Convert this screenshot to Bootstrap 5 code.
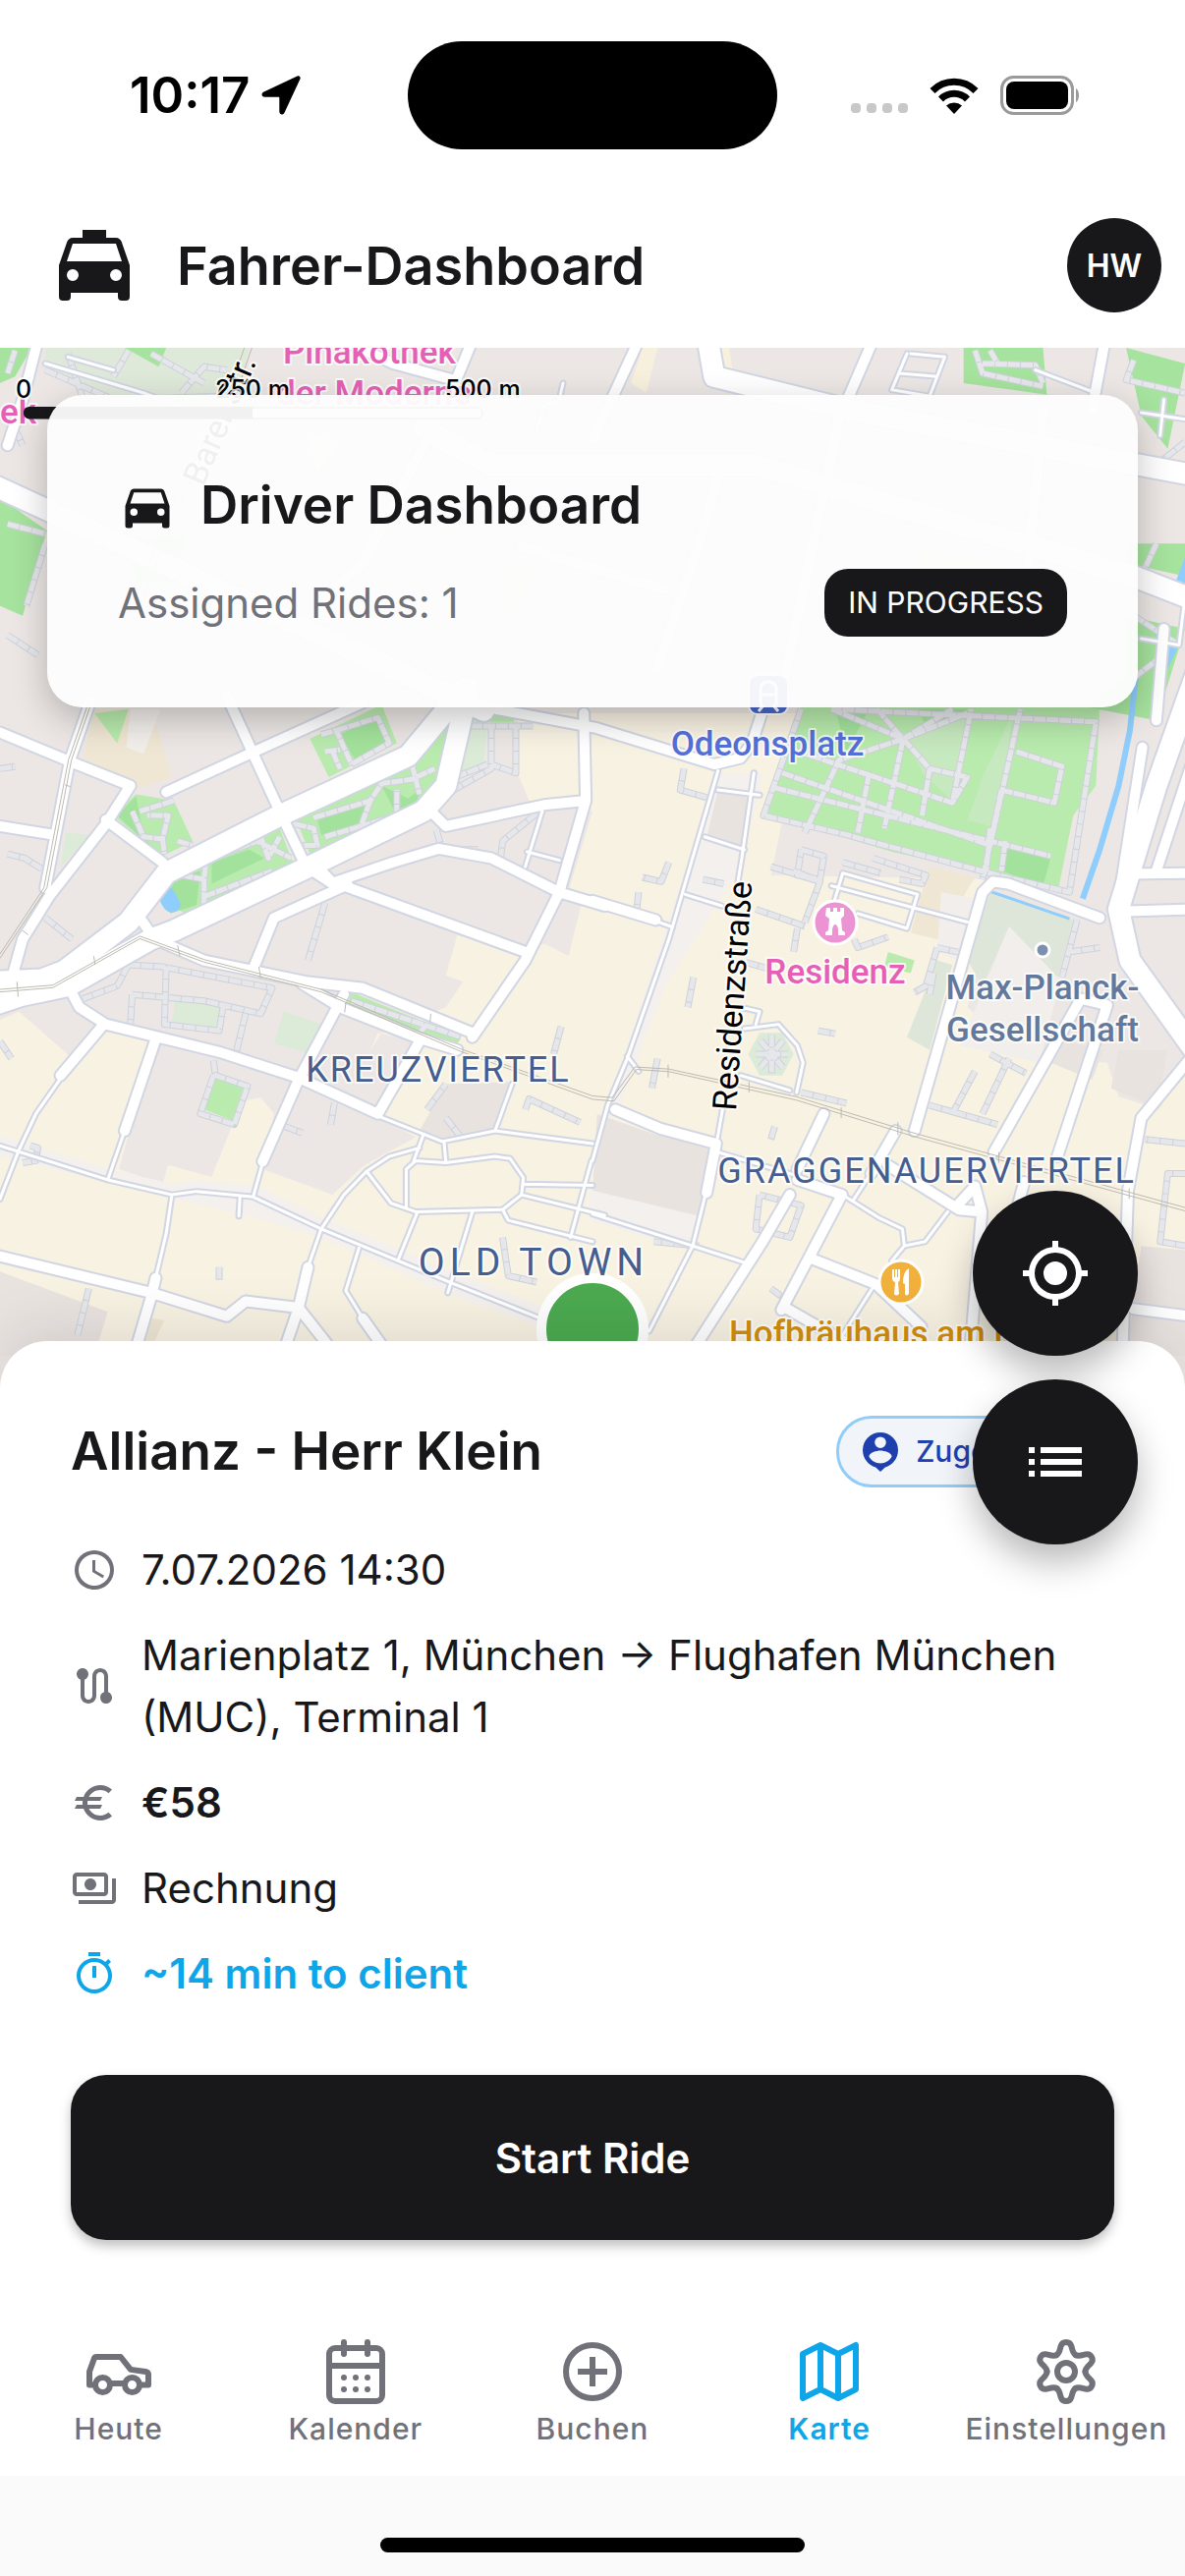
<!DOCTYPE html>
<html lang="de">
<head>
<meta charset="utf-8">
<meta name="viewport" content="width=device-width, initial-scale=1">
<title>Fahrer-Dashboard</title>
<link href="https://cdn.jsdelivr.net/npm/bootstrap@5.3.0/dist/css/bootstrap.min.css" rel="stylesheet">
<style>
:root{--ink:#18181b;--mute:#71717a;--sky:#0ea5e9}
body{font-family:Inter,"Noto Sans",sans-serif;color:var(--ink);background:#fff;font-size:42px;line-height:63px}
.screen{min-height:100vh}
svg{display:block;flex:none}
.status{height:194px;color:#000;padding:0 108px}
.clock{font-size:51px;font-weight:600;line-height:60px}
.island{width:376px;height:110px;border-radius:55px;background:#000}
.side{flex:1 1 0;gap:12px}
.signals{gap:22px}
.topbar{height:160px;padding:0 24px 8px 48px;gap:36px}
.heading{font-size:53px;line-height:81px;font-weight:600;margin:0}
.topbar .heading{font-size:54px}
.avatar{width:96px;height:96px;border-radius:50%;background:var(--ink);color:#fff;font-size:32px;font-weight:600;border:0;padding:0}
.mapwrap{flex:1 0 auto;background:#ece7e4;isolation:isolate}
.mapart{position:absolute;inset:0;width:100%;height:100%;z-index:-1}
.mapart path{vector-effect:non-scaling-stroke}
.mapart text{font-family:Roboto,"Noto Sans",sans-serif;font-size:35px;font-weight:500;paint-order:stroke;stroke:#fffc;stroke-width:4px;stroke-linejoin:round}
.mapart .street{font-weight:400;font-size:34px}
.mapart .district{font-size:36px;font-weight:400;letter-spacing:2px;fill:#465d8f}
.mapart .town{font-size:39px;letter-spacing:5px}
.mapart .ruler{font-family:Inter,sans-serif;font-size:25px;fill:#000}
.summary{margin:48px 48px 0;padding:72px;border:0;border-radius:36px;background:rgba(253,253,253,.95);box-shadow:0 12px 36px rgba(0,0,0,.24);color:var(--ink)}
.state{background:var(--ink);border-radius:24px;padding:0 24px;font-size:30px;line-height:69px;font-weight:400;color:#fff}
.sheet{background:#fff;border-radius:48px 48px 0 0;padding:72px;box-shadow:0 -12px 60px rgba(0,0,0,.1)}
.fabs{position:absolute;right:48px;top:-153px;gap:24px}
.fab{width:168px;height:168px;border-radius:50%;border:0;padding:48px;background:var(--ink);color:#fff;box-shadow:0 18px 36px rgba(0,0,0,.28)}
.chip{border:3px solid #90cdf9;border-radius:36px;background:#f1f4f9;color:#1e40af;font-size:30px;font-weight:500;line-height:67px;padding:0 24px 0 18px;gap:12px}
.facts{gap:24px;margin-top:48px}
.fact{gap:24px}
.gray{color:var(--mute)}
.sky{color:var(--sky)}
.start{margin-top:72px;height:168px;border:0;border-radius:36px;background:var(--ink);color:#fff;font-size:42px;font-weight:600;box-shadow:0 6px 12px rgba(0,0,0,.25)}
.tabs{height:168px;background:#fff;z-index:1}
.tab{flex:1 1 0;min-width:0;padding-top:26px;color:var(--mute);text-decoration:none;font-size:30px;line-height:36px;font-weight:500;letter-spacing:1px;gap:4px}
.tab.active{color:var(--sky);font-weight:600}
.tab svg{fill:none;stroke:currentColor;stroke-width:2;stroke-linecap:round;stroke-linejoin:round}
.homebar{height:102px;background:#fafafa;padding-bottom:24px}
.homebar span{width:432px;height:15px;border-radius:8px;background:#000}
</style>
</head>
<body>
<div class="screen d-flex flex-column">
  <div class="status d-flex align-items-center">
    <div class="side d-flex align-items-center">
      <span class="clock ms-4">10:17</span>
      <svg width="40" height="40" viewBox="0 0 40 40" fill="currentColor"><path d="M36.500.6 2.500 16.400C-.6 17.900.1 21.700 3.400 21.700H17.300C18 21.700 18.300 22 18.300 22.700V36.600C18.300 39.900 22.200 40.700 23.600 37.500L39.400 3.500C40.300 1.500 38.500-.3 36.500.6Z"/></svg>
    </div>
    <div class="island"></div>
    <div class="side signals d-flex align-items-center justify-content-end">
      <svg width="58" height="38" viewBox="0 0 58 38" fill="#c8c8ca"><rect y="27" width="10" height="10" rx="4"/><rect x="16" y="27" width="10" height="10" rx="4"/><rect x="32" y="27" width="10" height="10" rx="4"/><rect x="48" y="27" width="10" height="10" rx="4"/></svg>
      <svg width="50" height="38" viewBox="0 0 50 38"><g fill="none" stroke="#000" stroke-width="7"><path d="M3 14.500a31 31 0 0 1 44 0"/><path d="M11.500 23a19 19 0 0 1 27 0"/></g><path d="M25 38 17 29.500a12 12 0 0 1 16 0Z"/></svg>
      <svg width="80" height="40" viewBox="0 0 80 40"><rect x="1.500" y="1.500" width="72" height="37" rx="12" fill="none" stroke="#9a9a9c" stroke-width="3"/><rect x="6" y="6" width="63" height="28" rx="8"/><path d="M77 13c4 2 4 12 0 14Z" fill="#9a9a9c"/></svg>
    </div>
  </div>

  <header class="topbar d-flex align-items-center">
    <svg width="96" height="96" viewBox="0 0 24 24" fill="currentColor"><path d="M5,11L6.5,6.5H17.5L19,11M17.5,16A1.5,1.5 0 0,1 16,14.500A1.5,1.5 0 0,1 17.5,13A1.5,1.5 0 0,1 19,14.500A1.5,1.5 0 0,1 17.5,16M6.5,16A1.5,1.5 0 0,1 5,14.500A1.5,1.5 0 0,1 6.5,13A1.5,1.5 0 0,1 8,14.500A1.5,1.5 0 0,1 6.5,16M18.920,6C18.720,5.420 18.160,5 17.5,5H15V3H9V5H6.5C5.840,5 5.280,5.420 5.080,6L3,12V20A1,1 0 0,0 4,21H5A1,1 0 0,0 6,20V19H18V20A1,1 0 0,0 19,21H20A1,1 0 0,0 21,20V12L18.920,6Z"/></svg>
    <h1 class="heading flex-grow-1">Fahrer-Dashboard</h1>
    <button class="avatar" type="button" aria-label="Profil">HW</button>
  </header>

  <main class="mapwrap position-relative d-flex flex-column">
    <svg class="mapart" viewBox="0 354 1206 1998" preserveAspectRatio="xMidYMin slice" role="img" aria-label="Karte">
      <defs>
        <g id="wide">
          <g transform="translate(0 700) scale(.3846 .4337)">
            <path d="M-20 690 110 685 170 665 340 550 440 435 740 300 1080 160 1230 0"/>
            <path d="M-20 745 60 722 180 700 400 590 460 570 830 415 1120 290 1180 230 1240 0"/>
            <path d="M3180-70 3060 230 2960 520 2990 640 3160 850"/>
          </g>
          <g transform="translate(0 340) scale(.7692 .3333)">
            <path d="M-20 450 640 1150"/><path d="M560 290 650 400 1000 400 1500 740 1600 830"/><path d="M935 0 945 130 1120 230 1600 440"/>
          </g>
        </g>
        <g id="mid">
          <g transform="translate(0 700) scale(.3846 .4337)">
            <path d="M0 105 190 175 345 230 280 320 130 490 60 590 35 670M240 30 185 170 120 470M0 325 140 345M280 310 430 410M600 20 740 290 810 420 880 460M440 245 660 155 960 35"/>
            <path d="M840 420 880 458 1040 410 1160 378 1300 400 1480 480 1600 512M910 465 1390 620M920 462 725 540 670 660M370 540 410 590 540 640 810 690 960 705 1250 810M800 695 900 750 1100 820 1210 850"/>
            <path d="M1545 60 1550 265 1480 480 1390 640 1250 820M1550 265 1440 275 1180 325 1140 290M180 700 210 750 280 790 580 855 790 915 1000 1000 1110 830M270 795 160 910M410 830 330 1040M910 720 790 920 695 1112"/>
            <path d="M-20 1330 400 1420 600 1475 650 1440 790 1455 870 1545M412 1385 400 1430 350 1580M815 1360 790 1455 750 1560M960 1480 1040 1580M1250 40 1580 95 1890 180 1960 165 1990 130 2030 20"/>
            <path d="M1568 500 1735 545M2420 1040 2600 480 2628 455 2668 460 2910 540M2980 437 3160 435M2960 525 3160 520M3060 430 3160 160M3023 140 2960 500M2630 1090 2860 730 2930 745 2798 1100M2370 1040 2305 1140M2180 1000 2110 1130"/>
            <path d="M3150 870 3020 1010 2985 1180 2970 1568M1628 990 1748 1035 1895 1070 1870 1185M2090 1190 2018 1300 1830 1560M2110 1155 2228 1190 2068 1460M2148 1340 2318 1400 2438 1500M2078 1455 2300 1568M2348 1120 2538 1225 2598 1230 2580 1170 2528 1220M2598 1230 2568 1550M3000 1458 3150 1475M2710 1160 2680 1260"/>
          </g>
          <g transform="translate(0 340) scale(.7692 .3333)">
            <path d="M50 20 30 200 10 340M455 20 520 90 600 140M625 20 600 160 480 700 430 800M845 20 785 320M1155 20 1110 260 1030 1140M1462 20 1445 230M1380 240 1360 700M1540 900 1530 1180"/>
            <path d="M950 440 930 600 870 1020M690 650 880 780"/>
          </g>
        </g>
        <g id="lane">
          <g transform="translate(0 700) scale(.3846 .4337)">
            <path d="M0 1075 285 1155 455 1190 520 1182 670 1195 850 1270 1190 1395 1430 1480M455 1190 440 1280 412 1385M328 1045 285 1155M695 1115 670 1195M162 915 95 1000 50 1085 0 1200M815 1360 850 1270 910 1190 970 1135 1030 1100 1110 1080"/>
            <path d="M970 1135 1035 1210 1100 1230 1330 1225 1380 1190 1385 1150 1350 1105 1310 1100 1180 1115 1100 1110 1075 1130 1075 1220M1000 1005 1170 1065 1310 1040 1568 1070M1310 1040 1355 930M1095 1110 1120 1050M1175 1065 1180 1115M1385 1165 1568 1168M1380 1190 1600 1238M1330 1225 1345 1250 1568 1300"/>
            <path d="M1105 1230 1055 1340M1250 1230 1185 1420M950 1315 915 1415 960 1480M1565 1110 1510 1290M635 1195 632 1240M1395 385 1480 405M1435 290 1390 420"/>
            <path d="M1900 195 1770 590 1660 870 1608 980 1568 1110M1995 200 1963 400 1950 470M1900 240 2010 252M1865 350 1970 380M1813 485 1910 512M1728 545 1780 562M1568 1235 1833 1310 1973 1350M1868 1185 1833 1310 1718 1510M1912 990 1898 1060M1660 865 1690 900"/>
            <path d="M2238 1195 2328 1245 2388 1270 2393 1310 2360 1345M2393 1310 2448 1300 2508 1230M2308 1410 2208 1550M1900 1090 2108 1145M2308 1135 2260 1200"/>
            <path d="M2208 500 2230 435 2428 485 2400 565 2270 530M2200 465 2560 550M1970 800 2060 790 2110 840 2125 880 2108 950M1960 910 2090 945M1960 750 2010 760 2000 790"/>
          </g>
          <g transform="translate(0 340) scale(.7692 .3333)">
            <path d="M60 90 190 180 260 240M90 70 150 110M745 150 740 200 720 220 710 300M1205 60 1250 70 1230 190 1180 170 1200 60M1190 120 1240 130M1540 200 1535 310M1510 240 1568 260M1370 110 1450 180M1510 760 1568 800 1560 950 1510 930"/>
          </g>
        </g>
        <g id="walk">
          <g transform="translate(0 700) scale(.3846 .4337)">
            <path d="M340 650 430 655 720 705 690 765 540 735 350 720M440 655 435 790 580 805 590 750M350 720 345 790M340 650 310 700 220 730M650 765 625 855M565 910 530 1000 620 1025 655 935 570 910M565 875 570 910M20 390 65 400 110 425M0 190 40 185M120 540 190 590M0 830 30 870M860 505 815 640M930 735 1220 820M1130 790 1110 810M1130 990 1180 930M1390 990 1400 965 1535 1020M1180 1010 1220 1055M1485 795 1465 860M885 975 875 1025M755 1030 800 1045M80 1075 100 1080 95 1110 60 1115M580 1360 580 1390M235 1410 205 1520"/>
            <path d="M350 290 380 350 430 355 445 300 390 300M430 355 435 390M460 265 370 290M470 360 510 370M480 440 540 450 545 405 680 360 770 400M540 450 540 510M690 350 710 400 740 350M540 490 720 430M780 320 830 330 840 370 800 370M830 305 980 265 1010 225 1090 215 1150 190M980 265 955 325 1050 300 1050 240M955 325 860 350M1090 180 1110 250"/>
            <path d="M850 110 890 100 930 180M860 150 900 145M890 100 1000 70 1030 130 930 180M880 150 900 190M1245 90 1410 90M1300 90 1300 190 1200 240M1365 90 1365 200 1300 180M1205 210 1290 180M1420 295 1330 360 1325 400M1155 335 1165 365M1200 380 1265 380M1330 1290 1345 1380 1420 1395"/>
            <path d="M2120 50 2020 300 2240 345 2300 360 2640 440 2830 480 2900 80 2200 50M2080 140 2520 270 2570 50M2070 200 2620 370 2700 50M2050 235 2780 395M2200 50 2390 120 2560 60M2390 120 2340 330M2390 120 2220 170 2130 340M2390 120 2460 190 2440 300M2460 190 2560 210 2520 270M2320 50 2390 120 2520 50M2690 150 2810 185 2790 270 2650 240M2300 200 2270 340M2650 240 2600 450M2620 330 2610 430M2660 360 2650 430"/>
            <path d="M2040 420 2170 455 2130 550M2170 455 2100 430M2120 380 2180 395 2170 450 2110 440 2120 380M2000 520 2130 560M2310 400 2450 440 2440 460 2380 450M2230 410 2330 435M1810 190 1800 240 1880 260M1770 410 1750 455 1700 445M1690 480 1685 520M1835 680 1820 750M1975 645 2035 660M2110 565 2100 620M2260 590 2270 610 2350 585M2165 805 2210 812M1860 450 1915 460M2470 670 2460 720M2480 610 2450 700 2420 715M2480 610 2560 625"/>
            <path d="M2000 860 2085 860M2042 815 2042 905M2012 828 2072 892M2072 828 2012 892M2460 980 2640 1025M2580 900 2520 1000M2670 870 2600 1000M2620 860 2715 905M2850 545 2810 680M2830 620 2910 610M2120 950 2240 975M1740 870 1725 940M2050 1030 2040 1060M2010 1190 2000 1270 2090 1290 2120 1215 2010 1190M1850 1310 1730 1300M2040 1410 2070 1430M3136 1070 3030 1060M3136 1140 3090 1140 3070 1300 3136 1310"/>
          </g>
          <g transform="translate(0 340) scale(.7692 .3333)">
            <path d="M20 50 10 120M60 110 150 200 300 190M170 50 150 130M200 60 270 150M240 180 270 100 300 110M90 60 110 200M20 290 30 340M1290 50 1300 120 1380 160M1300 90 1370 95 1380 150M1310 50 1320 90M1568 330 1530 400M10 580 60 610M60 640 35 830M10 920 50 980M1500 80 1490 140 1568 180M1530 640 1510 740M1500 860 1560 950M1500 1050 1540 980"/>
          </g>
        </g>
        <g id="rail">
          <g transform="translate(0 700) scale(.3846 .4337)">
            <path d="M236 30 181 170 116 470 0 625M244 30 189 170 124 470 0 635M0 708 140 698 370 583 540 638 850 708 1220 848 1568 958 1620 962 1680 890 1770 895 2108 960 2418 1045 3136 1220M0 714 140 704 370 589 540 644 850 714 1220 854 1568 966 1625 970 1684 896 1770 901 2108 968 2418 1053 3136 1228"/>
            <path d="M45 690 48 725M248 630 252 650M470 605 476 630M685 655 690 682M915 740 912 762M1140 765 1138 785M172 228 186 232M60 570 75 580M1768 885 1768 915M1982 925 1982 950M2226 985 2226 1010M2376 1020 2376 1050M2643 1090 2643 1115M2988 1175 2988 1200"/>
          </g>
          <g transform="translate(0 340) scale(.7692 .3333)"><path d="M325 30 300 200 235 480 180 800M335 30 310 200 245 480 190 800"/></g>
        </g>
      </defs>

      <!-- land use -->
      <g transform="translate(0 700) scale(.3846 .4337)">
        <path fill="#f8f2e3" d="M0 780 50 760 185 865 275 800 405 835 315 1130 430 1165 445 1120 560 1148 640 970 690 962 725 1000 695 1130 880 1190 965 1120 1100 1055 1010 1010 1110 830 1000 810 980 850 1010 810 1180 750 1225 690 1180 675 1210 580 1380 630 1440 600 1505 630 1540 500 1500 490 1568 290 1400 265 1370 200 1370 60 2130 60 2040 440 2640 450 2560 750 2700 860 2930 880 2960 960 3068 990 3136 860 3136 1568 0 1568Z"/>
        <path fill="#f3f0ee" d="M0 1050 290 1130 460 1165 520 1155 680 1170 860 1245 1190 1370 1430 1450 1430 1500 1180 1420 850 1290 700 1250 0 1100ZM1560 1170 1870 1230 1830 1320 1560 1250ZM1900 200 2020 200 1960 420 1760 700 1640 980 1568 1110 1600 1000Z"/>
        <path fill="#efe6d3" d="M250 50 400 50 455 210 365 235 220 165ZM2458 420 2580 445 2480 590 2410 575ZM375 1475 435 1485 400 1550 360 1530Z"/>
        <path fill="#e9e3e0" d="M0 1370 285 1465 250 1568 0 1568ZM1580 1000 1740 1050 1890 1080 1850 1240 1568 1180ZM1110 1040 1180 930 1350 925 1300 1040 1170 1060ZM1900 240 1990 260 1960 380 1870 350ZM2820 830 2920 850 2890 920 2780 880ZM3020 1310 3136 1320 3136 1568 2980 1568ZM2960 850 3090 850 3060 985 2940 940Z"/>
        <path fill="#f1eeeb" d="M2490 480 2620 500 2560 650 2480 620ZM2670 560 2830 610 2750 880 2540 840ZM345 50 425 50 380 155 335 140Z"/>
        <path fill="#dee6da" d="M2620 480 2840 545 2800 680 2670 560 2600 700 2560 640ZM2480 640 2520 650 2460 850 2400 820Z"/>
        <path fill="#dcead8" d="M465 725 585 750 575 800 455 785ZM750 760 850 790 825 860 725 835ZM1240 60 1290 90 1280 180 1220 200ZM175 340 240 345 160 420ZM2010 810 2070 810 2100 860 2070 910 2010 910 1980 860Z"/>
        <path fill="#b8ebad" d="M300 300 360 250 460 265 510 360 430 395ZM470 440 740 330 775 410 490 530 430 500ZM780 300 1000 220 1190 80 1150 240 1120 280 820 390ZM820 120 1010 40 1050 130 870 210ZM250 60 340 50 310 130ZM930 715 1220 820 1205 845 920 745ZM560 915 645 935 615 1015 540 990ZM1260 50 1360 50 1360 80 1260 80ZM2120 40 2910 40 2900 230 2840 300 2800 475 2640 440 2360 385 2230 350 2030 295ZM2350 620 2420 640 2410 670 2340 655Z"/>
        <path fill="#a3e29c" d="M310 300 360 255 380 350 420 390ZM440 450 530 430 520 510 450 530ZM560 410 660 380 700 400 560 460ZM840 310 970 270 950 330 850 345ZM1010 230 1080 260 1110 240 1100 280 1050 300ZM900 110 1000 65 1030 125 940 170ZM2650 370 2780 400 2760 465 2650 430ZM2210 50 2300 50 2240 150ZM2430 50 2560 50 2460 110Z"/>
        <path fill="#c7e9bf" d="M2400 120 2560 60 2520 265 2440 200ZM2600 210 2680 60 2640 330 2560 310Z"/>
        <path fill="#8fcdfc" d="M421 490Q430 460 452 468 480 500 478 515 460 535 440 523 424 510 421 490Z"/>
      </g>
      <g transform="translate(0 340) scale(.7692 .3333)">
        <path fill="#dfe9da" d="M60 42 330 42 310 250 200 240 60 110Z"/>
        <path fill="#a6e39e" d="M0 42 42 42 20 130 0 150ZM0 500 62 600 30 860 0 830ZM1275 42 1380 42 1385 185 1275 150ZM1490 42 1568 90 1545 350 1510 250ZM1490 640 1568 640 1568 740 1490 700ZM1490 860 1568 900 1530 1180 1440 1140 1490 1040ZM170 620 245 620 230 760 180 760ZM165 42 220 42 210 100Z"/>
        <path fill="#f7f0dd" d="M850 42 870 42 855 180 835 150ZM935 42 965 42 970 120 945 110ZM410 310 450 330 420 420Z"/>
        <path fill="#ece5d0" d="M1220 660 1320 700 1300 780 1210 720ZM670 700 710 690 680 880 660 850Z"/>
        <path fill="#8fcdfc" d="M1568 680 1555 760 1568 780ZM1525 890 1560 950 1545 1020 1535 960Z"/>
      </g>
      <g fill="none" stroke="#8fcdfc" transform="translate(0 700) scale(.3846 .4337)">
        <path stroke-width="6" d="M3006-30 2990 100 2960 230 2910 380 2865 495"/><path stroke-width="3" d="M2620 478 2830 542"/>
      </g>

      <!-- streets -->
      <g fill="none" stroke-linejoin="round">
        <use href="#walk" stroke="#cfd1da" stroke-width="7"/>
        <use href="#walk" stroke="#e6e7ea" stroke-width="5" stroke-dasharray="12 1"/>
        <g stroke-linecap="round">
          <use href="#lane" stroke="#d1d6e2" stroke-width="7"/>
          <use href="#mid" stroke="#d1d6e2" stroke-width="14"/>
          <use href="#wide" stroke="#d1d6e2" stroke-width="25"/>
          <use href="#lane" stroke="#fff" stroke-width="3"/>
          <use href="#mid" stroke="#fff" stroke-width="10"/>
          <use href="#wide" stroke="#fff" stroke-width="21"/>
        </g>
        <use href="#rail" stroke="#bdbab0" stroke-width="1"/>
      </g>

      <!-- points of interest -->
      <rect x="762" y="687" width="40" height="40" rx="9" fill="#4868cd" stroke="#fff" stroke-width="2"/>
      <path d="M774 718V702q0-8 8-8t8 8v16M774 707h16M772 724l5-6M792 724l-5-6" fill="none" stroke="#fff" stroke-width="3"/>
      <circle cx="850" cy="939" r="22" fill="#ec94d3" stroke="#fff" stroke-width="3"/>
      <path fill="#fff" d="M841 924h4v4h3v-4h4v4h3v-4h4v8l-3 3 1 12 3 2v3h-7v-6q-1-5-3-5t-3 5v6h-7v-3l3-2 1-12-4-3Z"/>
      <circle cx="1061" cy="967" r="7" fill="#7d8fae" stroke="#fff" stroke-width="3"/>
      <circle cx="917" cy="1305" r="22" fill="#f2b13a" stroke="#fff" stroke-width="3"/>
      <path fill="#fff" d="M908 1292h2v8h1v-8h2v8h1v-8h2v9q0 3-2 4l1 12q-3 3-5 0l1-12q-3-1-3-4ZM925 1291v26q-3 3-4 0v-10l-2-1q0-12 6-15Z"/>
      <circle cx="603" cy="1353" r="52" fill="#4caa50" stroke="#fff" stroke-width="10"/>

      <text x="288" y="370" fill="#e560b5">Pinakothek</text>
      <text x="281" y="412" fill="#e560b5">der Moderne</text>
      <text x="0" y="431" fill="#e560b5">ek</text>
      <text class="street" transform="translate(207 496) rotate(-67)">Barer Str.</text>
      <text x="781" y="769" text-anchor="middle" fill="#5470d8">Odeonsplatz</text>
      <text x="850" y="1001" text-anchor="middle" fill="#e560b5">Residenz</text>
      <text x="1061" y="1017" text-anchor="middle" fill="#62789c">Max-Planck-</text>
      <text x="1061" y="1060" text-anchor="middle" fill="#62789c">Gesellschaft</text>
      <text class="street" transform="translate(749 1131) rotate(-86)">Residenzstraße</text>
      <text class="district" x="446" y="1101" text-anchor="middle">KREUZVIERTEL</text>
      <text class="district" x="943" y="1204" text-anchor="middle">GRAGGENAUERVIERTEL</text>
      <text class="district town" x="543" y="1298" text-anchor="middle">OLD TOWN</text>
      <text x="742" y="1369" fill="#d18e0c">Hofbräuhaus am Platzl</text>

      <!-- distance ruler -->
      <rect x="25" y="415" width="466" height="11" rx="5" fill="#fff" stroke="#18181b"/>
      <path fill="#18181b" d="M30 414H257V426H30Q24 426 24 420T30 414Z"/>
      <text class="ruler" x="16" y="405">0</text>
      <text class="ruler" x="219" y="405">250 m</text>
      <text class="ruler" x="453" y="405">500 m</text>
    </svg>

    <section class="card summary">
      <div class="d-flex align-items-center gap-4">
        <svg width="60" height="60" viewBox="0 0 24 24" fill="currentColor"><path d="M5,11L6.5,6.5H17.5L19,11M17.5,16A1.5,1.5 0 0,1 16,14.500A1.5,1.5 0 0,1 17.5,13A1.5,1.5 0 0,1 19,14.500A1.5,1.5 0 0,1 17.5,16M6.5,16A1.5,1.5 0 0,1 5,14.500A1.5,1.5 0 0,1 6.5,13A1.5,1.5 0 0,1 8,14.500A1.5,1.5 0 0,1 6.5,16M18.920,6C18.720,5.420 18.160,5 17.5,5H6.5C5.840,5 5.280,5.420 5.080,6L3,12V20A1,1 0 0,0 4,21H5A1,1 0 0,0 6,20V19H18V20A1,1 0 0,0 19,21H20A1,1 0 0,0 21,20V12L18.920,6Z"/></svg>
        <h2 class="heading">Driver Dashboard</h2>
      </div>
      <div class="d-flex align-items-center justify-content-between mt-4">
        <span class="gray">Assigned Rides: 1</span>
        <span class="state">IN PROGRESS</span>
      </div>
    </section>

    <section class="sheet position-relative mt-auto">
      <div class="d-flex align-items-center justify-content-between">
        <h2 class="heading">Allianz - Herr Klein</h2>
        <span class="chip d-flex align-items-center">
          <svg width="48" height="48" viewBox="0 0 24 24" fill="currentColor" fill-rule="evenodd"><path d="M12 2a9 9 0 0 0-9 9c0 4.200 2.800 7.700 6.600 8.700L12 22l2.400-2.300C18.200 18.700 21 15.200 21 11a9 9 0 0 0-9-9ZM12 4.200a2.900 2.900 0 1 1 0 5.800 2.900 2.900 0 0 1 0-5.800ZM12 17.800c-2.600 0-4.800-1.500-5.800-3.500.1-2 3.900-3 5.800-3s5.700 1 5.800 3c-1 2-3.200 3.500-5.800 3.500Z"/></svg>
          Zugewiesen
        </span>
      </div>
      <div class="facts d-flex flex-column">
        <div class="fact d-flex align-items-center"><svg class="gray" width="48" height="48" viewBox="0 0 24 24" fill="currentColor"><path d="M12,20A8,8 0 0,0 20,12A8,8 0 0,0 12,4A8,8 0 0,0 4,12A8,8 0 0,0 12,20M12,2A10,10 0 0,1 22,12A10,10 0 0,1 12,22C6.470,22 2,17.500 2,12A10,10 0 0,1 12,2M12.500,7V12.250L17,14.920L16.250,16.150L11,13V7H12.500Z"/></svg><span>7.07.2026 14:30</span></div>
        <div class="fact d-flex align-items-center"><svg class="gray" width="48" height="48" viewBox="0 0 24 24" fill="currentColor"><path d="M19 15.180V7c0-2.210-1.790-4-4-4s-4 1.790-4 4v10c0 1.100-.9 2-2 2s-2-.9-2-2V8.820C8.160 8.400 9 7.300 9 6c0-1.660-1.340-3-3-3S3 4.340 3 6c0 1.300.84 2.400 2 2.820V17c0 2.210 1.790 4 4 4s4-1.790 4-4V7c0-1.100.9-2 2-2s2 .9 2 2v8.180A3 3 0 0 0 18 21c1.660 0 3-1.340 3-3 0-1.300-.84-2.400-2-2.820z"/></svg><span>Marienplatz 1, München → Flughafen München (MUC), Terminal 1</span></div>
        <div class="fact d-flex align-items-center"><svg class="gray" width="48" height="48" viewBox="0 0 24 24" fill="currentColor"><path d="M15 18.500c-2.510 0-4.680-1.420-5.760-3.500H15l1-2H8.580c-.05-.33-.08-.66-.08-1s.03-.67.08-1H15l1-2H9.240C10.320 6.920 12.500 5.500 15 5.500c1.610 0 3.090.59 4.230 1.570L21 5.300C19.410 3.870 17.300 3 15 3c-3.920 0-7.240 2.510-8.480 6H3l-1 2h4.060c-.04.33-.06.66-.06 1s.02.67.06 1H3l-1 2h4.520c1.240 3.490 4.560 6 8.480 6 2.310 0 4.410-.87 6-2.300l-1.780-1.770c-1.130.98-2.600 1.570-4.220 1.570z"/></svg><span class="fw-semibold">€58</span></div>
        <div class="fact d-flex align-items-center"><svg class="gray" width="48" height="48" viewBox="0 0 24 24" fill="currentColor"><path d="M19 14V6c0-1.100-.9-2-2-2H3c-1.100 0-2 .9-2 2v8c0 1.100.9 2 2 2h14c1.100 0 2-.9 2-2zm-2 0H3V6h14v8zm-7-7c-1.660 0-3 1.340-3 3s1.340 3 3 3 3-1.340 3-3-1.340-3-3-3zm13 0v11c0 1.100-.9 2-2 2H4v-2h17V7h2z"/></svg><span>Rechnung</span></div>
        <div class="fact sky d-flex align-items-center"><svg width="48" height="48" viewBox="0 0 24 24" fill="currentColor"><path d="M15 1H9v2h6V1zm-4 13h2V8h-2v6zm8.030-6.610 1.420-1.420c-.43-.51-.9-.99-1.410-1.410l-1.420 1.420C16.070 4.740 14.120 4 12 4c-4.970 0-9 4.030-9 9s4.020 9 9 9 9-4.030 9-9c0-2.120-.74-4.070-1.970-5.610zM12 20c-3.870 0-7-3.130-7-7s3.130-7 7-7 7 3.130 7 7-3.130 7-7 7z"/></svg><span class="fw-semibold">~14 min to client</span></div>
      </div>
      <button class="start w-100" type="button">Start Ride</button>
      <div class="fabs d-flex flex-column">
        <button class="fab" type="button" aria-label="Standort"><svg width="72" height="72" viewBox="0 0 24 24" fill="currentColor"><path d="M12,8A4,4 0 0,1 16,12A4,4 0 0,1 12,16A4,4 0 0,1 8,12A4,4 0 0,1 12,8M3.050,13H1V11H3.050C3.500,6.830 6.830,3.500 11,3.050V1H13V3.050C17.170,3.500 20.500,6.830 20.950,11H23V13H20.950C20.500,17.170 17.170,20.500 13,20.950V23H11V20.950C6.830,20.500 3.500,17.170 3.050,13M12,5A7,7 0 0,0 5,12A7,7 0 0,0 12,19A7,7 0 0,0 19,12A7,7 0 0,0 12,5Z"/></svg></button>
        <button class="fab" type="button" aria-label="Liste"><svg width="72" height="72" viewBox="0 0 24 24" fill="currentColor"><path d="M3 7h2v2H3zM3 11h2v2H3zM3 15h2v2H3zM7 7h14v2H7zM7 11h14v2H7zM7 15h14v2H7z"/></svg></button>
      </div>
    </section>
  </main>

  <nav class="tabs position-relative d-flex">
    <a class="tab d-flex flex-column align-items-center" href="#heute"><svg width="72" height="72" viewBox="0 0 24 24"><path d="M3.500 16.500H2V12L3.700 7.300Q3.900 7 4.300 7H12.600L16 11.300 21 12Q22 12.200 22 13V16.500H19.500M9.500 16H13.500"/><circle cx="6.500" cy="16.500" r="2.500"/><circle cx="16.500" cy="16.500" r="2.500"/></svg>Heute</a>
    <a class="tab d-flex flex-column align-items-center" href="#kalender"><svg width="72" height="72" viewBox="0 0 24 24"><rect x="3" y="4" width="18" height="18" rx="2"/><path d="M3 10H21M8 2V6M16 2V6M8 14h0M12 14h0M16 14h0M8 18h0M12 18h0M16 18h0"/></svg>Kalender</a>
    <a class="tab d-flex flex-column align-items-center" href="#buchen"><svg width="72" height="72" viewBox="0 0 24 24"><circle cx="12" cy="12" r="9"/><path stroke-linecap="butt" d="M12 7V17M7 12H17"/></svg>Buchen</a>
    <a class="tab active d-flex flex-column align-items-center" href="#karte" aria-current="page"><svg width="72" height="72" viewBox="0 0 24 24"><path d="M3 6 9 3 15 6 21 3V18L15 21 9 18 3 21ZM9 3V18M15 6V21"/></svg>Karte</a>
    <a class="tab d-flex flex-column align-items-center" href="#einstellungen"><svg width="72" height="72" viewBox="0 0 24 24"><defs><path id="tooth" d="M8.750 6.370C9.800 5.770 9.900 4.400 10.200 3.400 10.500 2.400 11.200 2 12 2 12.800 2 13.500 2.400 13.800 3.400 14.100 4.400 14.200 5.770 15.250 6.370"/></defs><use href="#tooth"/><use href="#tooth" transform="rotate(60 12 12)"/><use href="#tooth" transform="rotate(120 12 12)"/><use href="#tooth" transform="rotate(180 12 12)"/><use href="#tooth" transform="rotate(240 12 12)"/><use href="#tooth" transform="rotate(300 12 12)"/><circle cx="12" cy="12" r="3"/></svg>Einstellungen</a>
  </nav>
  <div class="homebar d-flex align-items-end justify-content-center"><span></span></div>
</div>
<script src="https://cdn.jsdelivr.net/npm/bootstrap@5.3.0/dist/js/bootstrap.bundle.min.js"></script>
</body>
</html>
